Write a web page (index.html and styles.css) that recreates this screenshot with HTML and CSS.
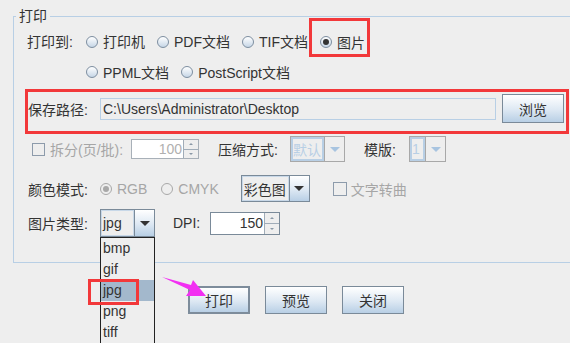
FILE: index.html
```html
<!DOCTYPE html>
<html lang="zh-CN">
<head>
    <meta charset="UTF-8">
    <meta name="viewport" content="width=device-width, initial-scale=1.0">
    <title>打印</title>
    <link rel="stylesheet" href="styles.css">
</head>
<body>
    <div class="page">
        <fieldset class="group">
            <legend>打印</legend>

            <div class="row row-target">
                <span class="label label-target">打印到:</span>
                <label class="opt"><span class="radio"></span>打印机</label>
                <label class="opt"><span class="radio"></span>PDF文档</label>
                <label class="opt"><span class="radio"></span>TIF文档</label>
                <span class="mark mark-pic">
                    <label class="opt"><span class="radio on"></span>图片</label>
                </span>
            </div>

            <div class="row row-target2">
                <label class="opt"><span class="radio"></span>PPML文档</label>
                <label class="opt"><span class="radio"></span>PostScript文档</label>
            </div>

            <div class="mark path-row">
                <span class="label label-path">保存路径:</span>
                <div class="field">C:\Users\Administrator\Desktop</div>
                <button class="btn btn-browse">浏览</button>
            </div>

            <div class="row row-split">
                <span class="check"></span>
                <span class="off split-label">拆分(页/批):</span>
                <div class="spinner spinner-off split-spin">
                    <span class="spin-val">100</span>
                    <span class="spin-btns"><i class="up"></i><i class="down"></i></span>
                </div>
                <span class="label label-zip">压缩方式:</span>
                <div class="combo combo-off zip-combo">
                    <span class="combo-val">默认</span>
                    <span class="combo-arrow"><i></i></span>
                </div>
                <span class="label label-tpl">模版:</span>
                <div class="combo combo-off tpl-combo">
                    <span class="combo-val">1</span>
                    <span class="combo-arrow"><i></i></span>
                </div>
            </div>

            <div class="row row-color">
                <span class="label label-wide">颜色模式:</span>
                <label class="opt opt-off"><span class="radio radio-off on"></span>RGB</label>
                <label class="opt opt-off opt-cmyk"><span class="radio radio-off"></span>CMYK</label>
                <div class="combo color-combo">
                    <span class="combo-val">彩色图</span>
                    <span class="combo-arrow"><i></i></span>
                </div>
                <span class="check check-curve"></span>
                <span class="off">文字转曲</span>
            </div>

            <div class="row row-type">
                <span class="label label-wide">图片类型:</span>
                <div class="combo type-combo">
                    <span class="combo-val">jpg</span>
                    <span class="combo-arrow"><i></i></span>
                </div>
                <span class="label label-dpi">DPI:</span>
                <div class="spinner dpi-spin">
                    <span class="spin-val">150</span>
                    <span class="spin-btns"><i class="up"></i><i class="down"></i></span>
                </div>
            </div>
        </fieldset>

        <div class="actions">
            <button class="btn btn-default">打印</button>
            <button class="btn">预览</button>
            <button class="btn">关闭</button>
        </div>

        <!-- 下拉列表，盖在按钮区上面 -->
        <ul class="dropdown">
            <li>bmp</li>
            <li>gif</li>
            <li class="picked">jpg</li>
            <li>png</li>
            <li>tiff</li>
        </ul>
        <div class="mark mark-jpg"></div>

        <svg class="pointer" width="50" height="26" viewBox="0 0 50 26">
            <polygon points="2,3 31,11 33,6 46,22 26,22 30,16" fill="#f22ff2"/>
        </svg>
    </div>
</body>
</html>
```

FILE: styles.css
```css
body {
    margin: 0;
    background: #eeeeee;
    font: 14px "Liberation Sans", "Noto Sans CJK SC", sans-serif;
    color: #333333;
    width: 570px;
    height: 343px;
    overflow: hidden;
}
.page {
    position: relative;
    display: flow-root;
    height: 343px;
}
.group {
    margin: 8px -20px 0 13px;
    padding: 0 0 22px 0;
    border: 1px solid #b8cfe5;
    border-right: 0;
}
.group legend {
    margin-left: 2px;
    padding: 0 3px;
    height: 16px;
    line-height: 16px;
}
.row {
    display: flex;
    align-items: center;
    padding-left: 14px;
}
.label {
    flex: none;
}
.off {
    color: #a6a6a6;
}

/* red marks */
.mark {
    border: 3px solid #f2383a;
    box-sizing: border-box;
}

/* radios */
.opt {
    display: inline-flex;
    align-items: center;
    height: 20px;
    margin-right: 12px;
    white-space: nowrap;
}
.radio {
    width: 12px;
    height: 12px;
    box-sizing: border-box;
    border: 1px solid #7d8ea0;
    border-radius: 50%;
    background: linear-gradient(#ffffff, #c6d6e6);
    margin-right: 5px;
    display: inline-flex;
    align-items: center;
    justify-content: center;
}
.radio.on::after {
    content: "";
    width: 6px;
    height: 6px;
    border-radius: 50%;
    background: #333333;
}
.radio-off {
    border-color: #a8a8a8;
    background: transparent;
}
.radio-off.on::after {
    background: #a8a8a8;
}
.opt-off {
    color: #a6a6a6;
}

.row-target {
    height: 33px;
    align-items: flex-end;
    padding-left: 13px;
}
.row-target .label,
.row-target > .opt {
    height: 20px;
    line-height: 20px;
    margin-bottom: 5px;
}
.label-target {
    width: 59px;
}
.mark-pic {
    display: flex;
    align-items: flex-end;
    width: 61px;
    height: 39px;
    margin-left: -11px;
    padding: 0 0 2px 8px;
}
.mark-pic .opt {
    margin-right: 0;
}
.row-target2 {
    height: 30px;
    padding-left: 72px;
}

/* path row */
.path-row {
    display: flex;
    align-items: center;
    width: 544px;
    height: 45px;
    margin: 2px 0 0 11px;
    padding-bottom: 6px;
}
.label-path {
    width: 72px;
}
.field {
    width: 396px;
    height: 22px;
    box-sizing: border-box;
    border: 1px solid #b8cfe5;
    line-height: 20px;
    padding-left: 2px;
    margin-right: 6px;
}
.btn {
    width: 62px;
    height: 28px;
    box-sizing: border-box;
    border: 1px solid #7a8a99;
    background: linear-gradient(#ffffff, #dde8f3 55%, #b8cfe5);
    font: 14px "Liberation Sans", "Noto Sans CJK SC", sans-serif;
    color: #333333;
    padding: 0;
}
.btn-browse {
    height: 29px;
}
.btn-default {
    border: 2px solid #7d8c9b;
}

/* split row */
.row-split {
    height: 30px;
    padding-left: 18px;
}
.check {
    width: 11px;
    height: 11px;
    border: 1px solid #8d9bab;
    margin-right: 5px;
    flex: none;
}
.split-label {
    width: 81px;
}
.spinner {
    display: flex;
    height: 20px;
    box-sizing: border-box;
    border: 1px solid #7a8a99;
    background: #ffffff;
}
.spinner-off {
    border-color: #a8b0b8;
    color: #b0b0b0;
}
.spin-val {
    flex: 1;
    text-align: right;
    line-height: 18px;
    padding-right: 1px;
}
.spin-btns {
    width: 14px;
    display: flex;
    flex-direction: column;
    border-left: 1px solid #a0acb8;
    background: #eeeeee;
}
.spin-btns i {
    flex: 1;
    display: flex;
    align-items: center;
    justify-content: center;
}
.spin-btns i + i {
    border-top: 1px solid #a0acb8;
}
.spin-btns .up::after {
    content: "";
    border: 2px solid transparent;
    border-bottom: 2px solid #8a98a6;
    border-top: 0;
}
.spin-btns .down::after {
    content: "";
    border: 2px solid transparent;
    border-top: 2px solid #8a98a6;
    border-bottom: 0;
}
.split-spin {
    width: 68px;
}
.dpi-spin {
    width: 70px;
    height: 23px;
    color: #333333;
}
.dpi-spin .spin-val {
    line-height: 21px;
}

/* combos */
.combo {
    display: flex;
    box-sizing: border-box;
    border: 1px solid #7a8a99;
    flex: none;
}
.combo-val {
    flex: 1;
    padding-left: 2px;
    box-shadow: inset 0 0 0 1px #c8d8e8;
    display: flex;
    align-items: center;
}
.combo-arrow {
    width: 19px;
    border-left: 1px solid #7a8a99;
    background: linear-gradient(#ffffff, #dde8f3 55%, #b8cfe5);
    display: flex;
    align-items: center;
    justify-content: center;
}
.combo-arrow i {
    border-left: 5px solid transparent;
    border-right: 5px solid transparent;
    border-top: 5px solid #333333;
}
.combo-off {
    border-color: #a8a8a8;
    color: #b8cfe5;
}
.combo-off .combo-val {
    box-shadow: inset 0 0 0 2px #b8cfe5;
}
.combo-off .combo-arrow {
    background: #eeeeee;
    border-left-color: #a8a8a8;
}
.combo-off .combo-arrow i {
    border-top-color: #a8c4e0;
}
.label-zip {
    width: 72px;
    margin-left: 19px;
}
.zip-combo {
    width: 55px;
    height: 26px;
}
.label-tpl {
    width: 45px;
    margin-left: 19px;
}
.tpl-combo {
    width: 37px;
    height: 26px;
}

.row-color {
    height: 35px;
    margin-top: 7px;
}
.label-wide {
    width: 72px;
}
.row-color .opt {
    margin-right: 14px;
}
.row-color .opt-cmyk {
    margin-right: 22px;
}
.color-combo {
    width: 69px;
    height: 27px;
}
.check-curve {
    width: 12px;
    height: 12px;
    margin-left: 23px;
    margin-right: 4px;
}

.row-type {
    height: 34px;
}
.type-combo {
    width: 55px;
    height: 28px;
}
.label-dpi {
    width: 37px;
    margin-left: 18px;
}

.actions {
    display: flex;
    gap: 15px;
    margin-top: 23px;
    padding-left: 188px;
}

/* popup list */
.dropdown {
    position: absolute;
    left: 100px;
    top: 237px;
    width: 55px;
    height: 106px;
    box-sizing: border-box;
    margin: 0;
    padding: 0;
    list-style: none;
    border: 1px solid #222222;
    border-bottom: 0;
    background: #eeeeee;
}
.dropdown li {
    height: 21px;
    line-height: 21px;
    padding-left: 2px;
}
.dropdown .picked {
    background: #a3b8cc;
}
.mark-jpg {
    position: absolute;
    left: 88px;
    top: 279px;
    width: 51px;
    height: 26px;
}
.pointer {
    position: absolute;
    left: 160px;
    top: 274px;
}
```
